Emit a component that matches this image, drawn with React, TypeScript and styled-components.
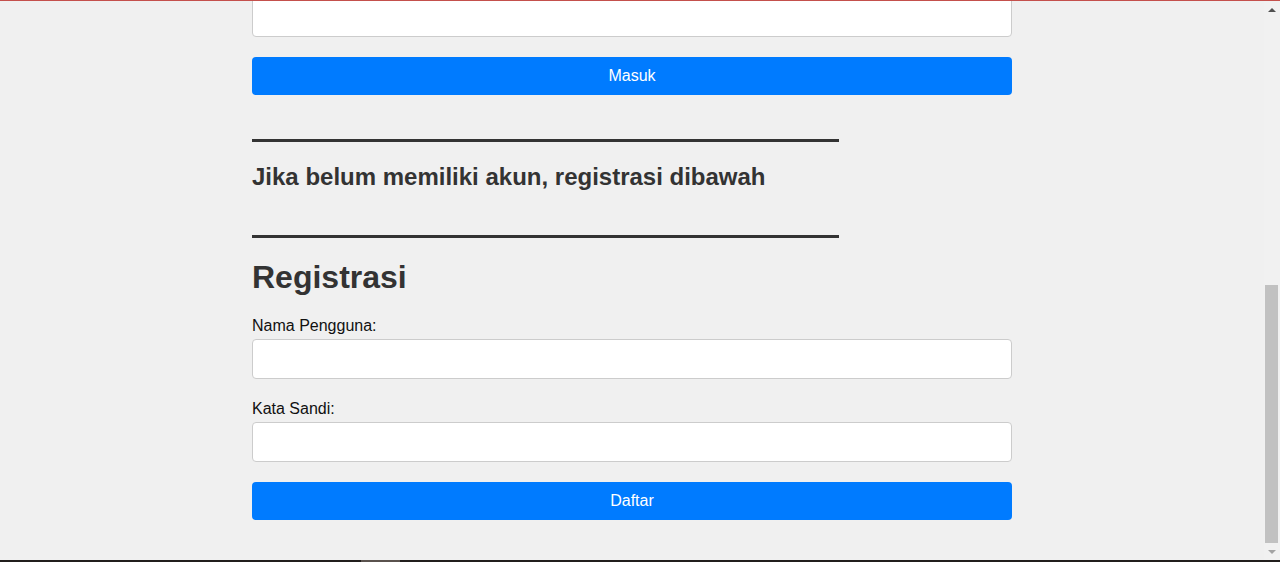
import React from "react";
import styled, { createGlobalStyle } from "styled-components";

const Global = createGlobalStyle`
  html, body {
    margin: 0;
    padding: 0;
    background: #f0f0f0;
    overflow: hidden;
  }
  * { box-sizing: border-box; }
`;

const Screen = styled.div`
  height: 100vh;
  display: flex;
  flex-direction: column;
  font-family: "Liberation Sans", Arial, sans-serif;
  background: #f0f0f0;
`;

const TopEdge = styled.div`
  height: 1px;
  flex: none;
  background: #c4504c;
`;

const BottomEdge = styled.div`
  height: 2px;
  flex: none;
  background: #211e1c;
  display: flex;
`;

const EdgeMark = styled.div`
  margin-left: 361px;
  width: 39px;
  background: #5a524e;
`;

const Viewport = styled.div`
  flex: 1;
  min-height: 0;
  display: flex;
  overflow: hidden;
`;

const Main = styled.main`
  flex: 1;
  display: flex;
  justify-content: center;
`;

const Column = styled.div`
  width: 760px;
  display: flex;
  flex-direction: column;
`;

const Input = styled.input<{ $cut?: boolean }>`
  display: block;
  width: 100%;
  height: 40px;
  margin: ${(p) => (p.$cut ? "-4px 0 0" : "0")};
  padding: 8px 10px;
  border: 1px solid #ccc;
  border-radius: 4px;
  background: #fff;
  font: 16px "Liberation Sans", Arial, sans-serif;
  outline: none;
`;

const Button = styled.button`
  display: block;
  width: 100%;
  height: 38px;
  margin-top: 20px;
  border: none;
  border-radius: 4px;
  background: #007bff;
  color: #fff;
  font: 16px "Liberation Sans", Arial, sans-serif;
  cursor: pointer;
`;

const Rule = styled.hr<{ $top: number }>`
  width: 587px;
  height: 3px;
  margin: ${(p) => p.$top}px 0 0;
  border: none;
  background: #333;
`;

const Note = styled.h3`
  margin: 21px 0 0;
  font-size: 24px;
  line-height: 1.15;
  font-weight: bold;
  color: #333;
`;

const Title = styled.h2`
  margin: 21px 0 0;
  font-size: 32px;
  line-height: 1.15;
  font-weight: bold;
  color: #333;
`;

const Field = styled.div<{ $top: number }>`
  display: flex;
  flex-direction: column;
  gap: 4px;
  margin-top: ${(p) => p.$top}px;
`;

const Label = styled.label`
  font-size: 16px;
  line-height: 18px;
  color: #111;
`;

const Scrollbar = styled.div`
  width: 16px;
  flex: none;
  display: flex;
  flex-direction: column;
  background: #f1f1f1;
`;

const ArrowBox = styled.div`
  height: 17px;
  flex: none;
  display: flex;
  align-items: center;
  justify-content: center;
  padding-right: 1px;
`;

const Arrow = styled.div<{ $down?: boolean }>`
  width: 0;
  height: 0;
  border-left: 4px solid transparent;
  border-right: 4px solid transparent;
  ${(p) =>
    p.$down
      ? "border-top: 4px solid #a3a3a3;"
      : "border-bottom: 4px solid #505050;"}
`;

const Track = styled.div`
  flex: 1;
  display: flex;
  flex-direction: column;
  justify-content: flex-end;
`;

const Thumb = styled.div`
  height: 258px;
  margin: 0 2px 0 1px;
  background: #c1c1c1;
`;

export default function App() {
  return (
    <>
      <Global />
      <Screen>
        <TopEdge />
        <Viewport>
          <Main>
            <Column>
              <Input $cut type="password" />
              <Button type="button">Masuk</Button>
              <Rule $top={44} />
              <Note>Jika belum memiliki akun, registrasi dibawah</Note>
              <Rule $top={44} />
              <Title>Registrasi</Title>
              <Field $top={22}>
                <Label htmlFor="reg-user">Nama Pengguna:</Label>
                <Input id="reg-user" type="text" />
              </Field>
              <Field $top={21}>
                <Label htmlFor="reg-pass">Kata Sandi:</Label>
                <Input id="reg-pass" type="password" />
              </Field>
              <Button type="button">Daftar</Button>
            </Column>
          </Main>
          <Scrollbar>
            <ArrowBox>
              <Arrow />
            </ArrowBox>
            <Track>
              <Thumb />
            </Track>
            <ArrowBox>
              <Arrow $down />
            </ArrowBox>
          </Scrollbar>
        </Viewport>
        <BottomEdge>
          <EdgeMark />
        </BottomEdge>
      </Screen>
    </>
  );
}
